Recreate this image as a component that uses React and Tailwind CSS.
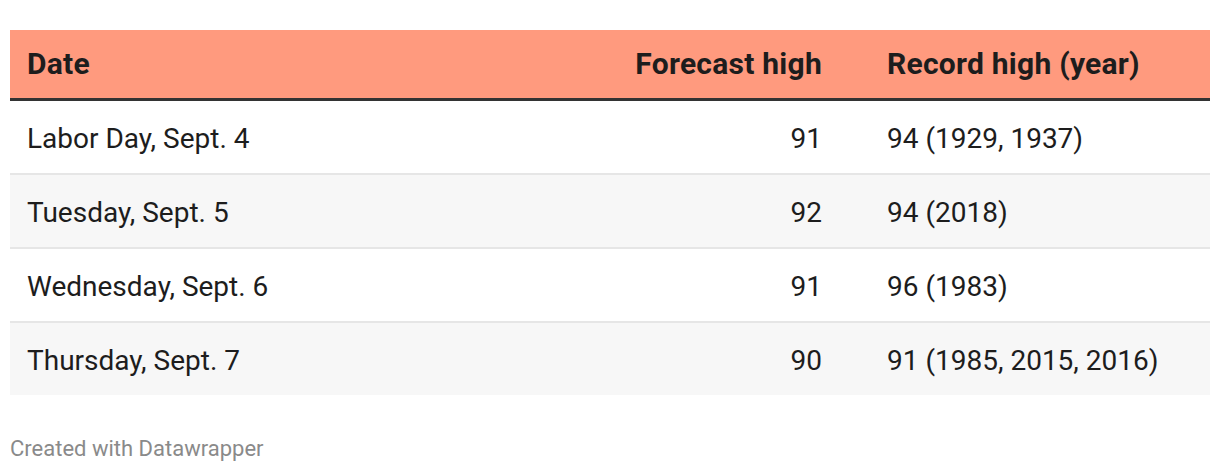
const rows = [
  { date: "Labor Day, Sept. 4", forecast: "91", record: "94 (1929, 1937)" },
  { date: "Tuesday, Sept. 5", forecast: "92", record: "94 (2018)" },
  { date: "Wednesday, Sept. 6", forecast: "91", record: "96 (1983)" },
  { date: "Thursday, Sept. 7", forecast: "90", record: "91 (1985, 2015, 2016)" },
];

export default function App() {
  return (
    <div className="w-[1220px] h-[472px] bg-white px-[10px] pt-[30px] font-['Roboto',sans-serif] text-[#1d1d1d]">
      {/* Header */}
      <div className="flex items-center h-[71px] bg-[#ff9a7e] border-b-[3px] border-[#333333] text-[30px] font-bold leading-[34px] tracking-[0.25px]">
        <div className="flex-1 pl-[17px]">Date</div>
        <div className="w-[250px] text-right">Forecast high</div>
        <div className="w-[388px] pl-[65px]">Record high (year)</div>
      </div>

      {/* Body */}
      {rows.map((r, i) => (
        <div
          key={r.date}
          className={`flex items-center pt-[3px] text-[28px] leading-[32px] ${
            i % 2 === 1 ? "bg-[#f7f7f7]" : "bg-white"
          } ${i < rows.length - 1 ? "h-[74px] border-b-2 border-[#e6e6e6]" : "h-[72px]"}`}
        >
          <div className="flex-1 pl-[17px]">{r.date}</div>
          <div className="w-[250px] text-right">{r.forecast}</div>
          <div className="w-[388px] pl-[65px]">{r.record}</div>
        </div>
      ))}

      {/* Footer */}
      <div className="mt-[41px] text-[22px] leading-[26px] text-[#8a8a8a]">Created with Datawrapper</div>
    </div>
  );
}
